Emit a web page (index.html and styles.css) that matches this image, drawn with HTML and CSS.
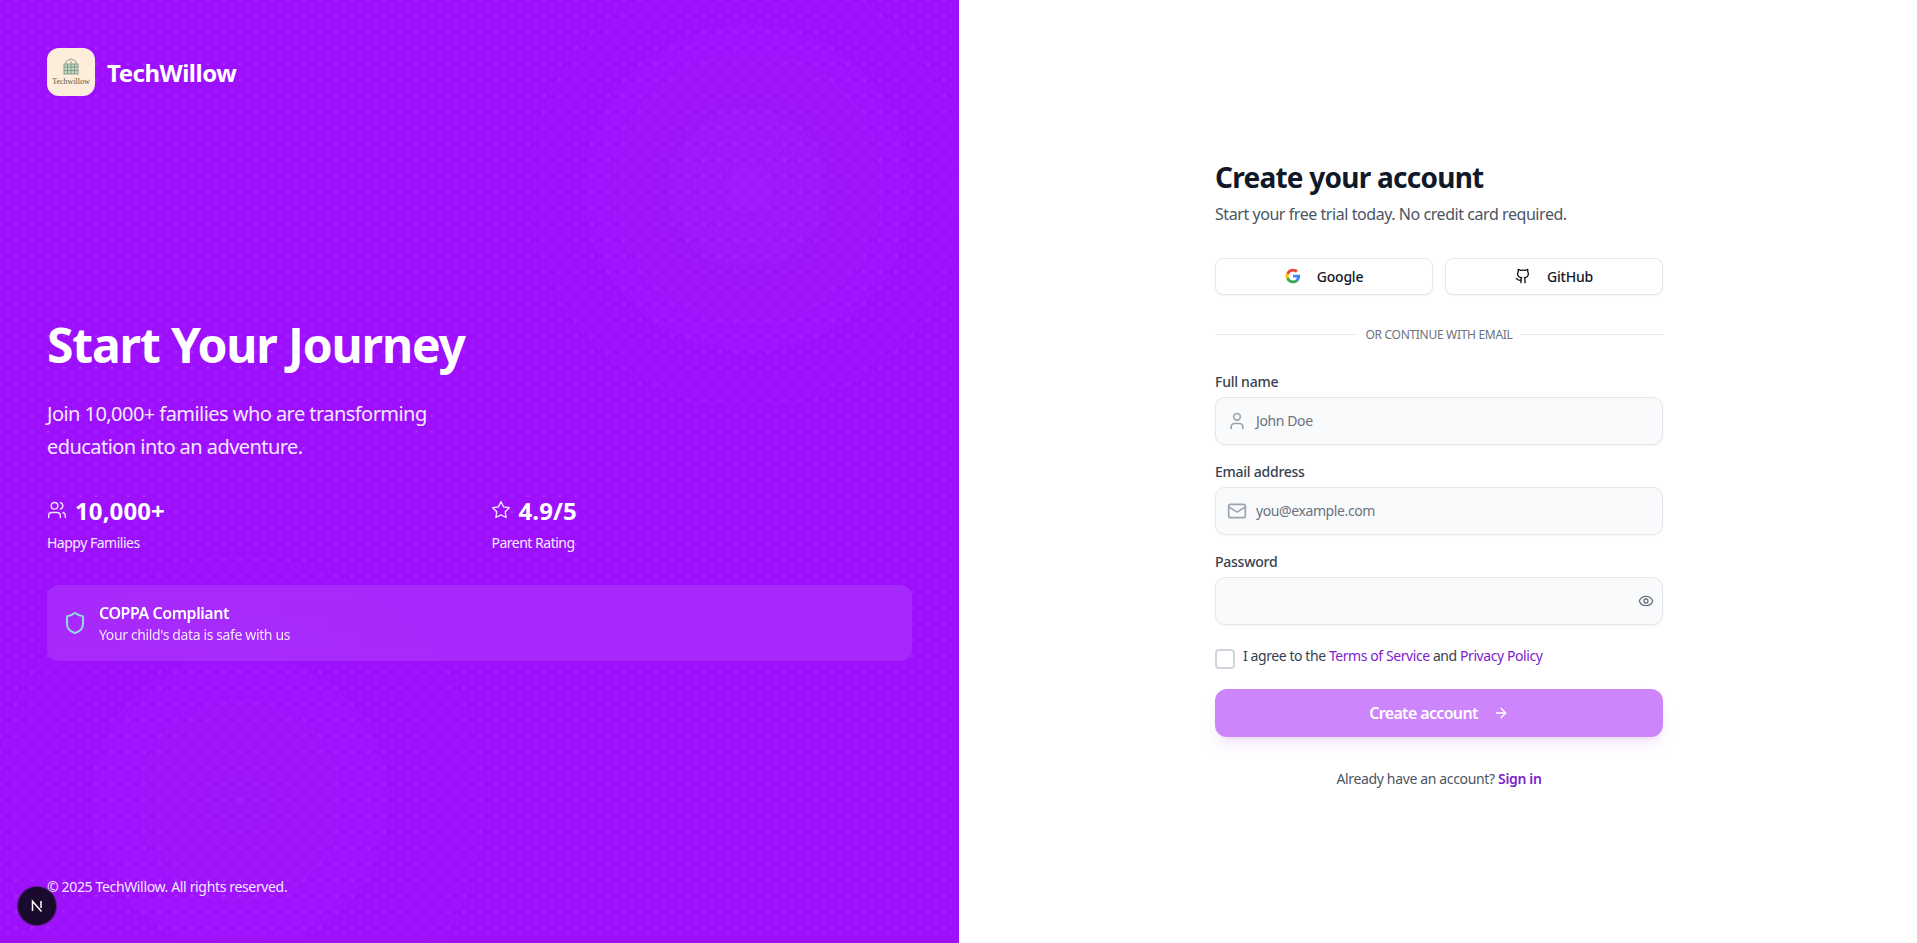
FILE: index.html
```html
<!DOCTYPE html>
<html lang="en">
<head>
    <meta charset="UTF-8" />
    <title>Sign up - TechWillow</title>
    <link rel="stylesheet" href="styles.css">
</head>
<body>
    <div class="page">
        <aside class="promo">
            <div class="brand">
                <div class="brand-logo">
                    <svg width="16" height="17" viewBox="0 0 16 17" fill="none" stroke="#7d9a88" stroke-width="0.9">
                        <path d="M3 6 L3 3.5 L8 0.8 L13 3.5 L13 6" />
                        <rect x="1" y="6" width="14" height="10" fill="#c6d6c3" />
                        <path d="M8 3 V16 M1 9 H15 M1 12.5 H15 M4.5 6 V16 M11.5 6 V16" />
                    </svg>
                    <span class="brand-logo-text">Techwillow</span>
                </div>
                <span class="brand-name">TechWillow</span>
            </div>

            <div class="promo-main">
                <h1>Start Your Journey</h1>
                <p class="promo-lead">Join 10,000+ families who are transforming education into an adventure.</p>
                <div class="stats">
                    <div class="stat">
                        <div class="stat-top">
                            <svg class="stat-icon" viewBox="0 0 24 24"><path d="M16 21v-2a4 4 0 0 0-4-4H6a4 4 0 0 0-4 4v2"/><circle cx="9" cy="7" r="4"/><path d="M22 21v-2a4 4 0 0 0-3-3.87"/><path d="M16 3.13a4 4 0 0 1 0 7.75"/></svg>
                            <span class="stat-value">10,000+</span>
                        </div>
                        <div class="stat-label">Happy Families</div>
                    </div>
                    <div class="stat">
                        <div class="stat-top">
                            <svg class="stat-icon stat-icon-star" viewBox="0 0 24 24"><path d="M12 2l3.09 6.26L22 9.27l-5 4.87 1.18 6.88L12 17.77l-6.18 3.25L7 14.14 2 9.27l6.91-1.01L12 2z"/></svg>
                            <span class="stat-value">4.9/5</span>
                        </div>
                        <div class="stat-label">Parent Rating</div>
                    </div>
                </div>
                <div class="coppa">
                    <svg class="coppa-icon" viewBox="0 0 24 24"><path d="M20 13c0 5-3.5 7.5-7.66 8.95a1 1 0 0 1-.67-.01C7.5 20.5 4 18 4 13V6a1 1 0 0 1 1-1c2 0 4.5-1.2 6.24-2.72a1.17 1.17 0 0 1 1.52 0C14.51 3.81 17 5 19 5a1 1 0 0 1 1 1z"/></svg>
                    <div>
                        <div class="coppa-title">COPPA Compliant</div>
                        <div class="coppa-text">Your child's data is safe with us</div>
                    </div>
                </div>
            </div>

            <div class="copyright">© 2025 TechWillow. All rights reserved.</div>
            <div class="next-badge">
                <svg width="14" height="14" viewBox="0 0 14 14" fill="none" stroke="#fff" stroke-width="1.5"><path d="M2.5 12V2.2L11.5 12.5" /><path d="M11 2v7" /></svg>
            </div>
        </aside>

        <main class="form-side">
            <div class="form-box">
                <h2>Create your account</h2>
                <p class="form-sub">Start your free trial today. No credit card required.</p>

                <div class="social">
                    <button class="social-btn">
                        <svg width="16" height="16" viewBox="0 0 24 24"><path fill="#4285F4" d="M22.56 12.25c0-.78-.07-1.53-.2-2.25H12v4.26h5.92c-.26 1.37-1.04 2.53-2.21 3.31v2.77h3.57c2.08-1.92 3.28-4.74 3.28-8.09z"/><path fill="#34A853" d="M12 23c2.97 0 5.46-.98 7.28-2.66l-3.57-2.77c-.98.66-2.23 1.06-3.71 1.06-2.86 0-5.29-1.93-6.16-4.53H2.18v2.84C3.99 20.53 7.7 23 12 23z"/><path fill="#FBBC05" d="M5.84 14.09c-.22-.66-.35-1.36-.35-2.09s.13-1.43.35-2.09V7.07H2.18C1.43 8.55 1 10.22 1 12s.43 3.45 1.18 4.93l2.85-2.22.81-.62z"/><path fill="#EA4335" d="M12 5.38c1.62 0 3.06.56 4.21 1.64l3.15-3.15C17.45 2.09 14.97 1 12 1 7.7 1 3.99 3.47 2.18 7.07l3.66 2.84c.87-2.6 3.3-4.53 6.16-4.53z"/></svg>
                        <span>Google</span>
                    </button>
                    <button class="social-btn">
                        <svg width="16" height="16" viewBox="0 0 24 24" fill="none" stroke="#111" stroke-width="2" stroke-linecap="round" stroke-linejoin="round"><path d="M15 22v-4a4.8 4.8 0 0 0-1-3.5c3 0 6-2 6-5.5.08-1.25-.27-2.48-1-3.5.28-1.15.28-2.35 0-3.5 0 0-1 0-3 1.5-2.64-.5-5.36-.5-8 0C6 2 5 2 5 2c-.3 1.15-.3 2.35 0 3.5A5.4 5.4 0 0 0 4 9c0 3.5 3 5.5 6 5.5-.39.49-.68 1.05-.85 1.65-.17.6-.22 1.23-.15 1.85v4"/><path d="M9 18c-4.51 2-5-2-7-2"/></svg>
                        <span>GitHub</span>
                    </button>
                </div>

                <div class="divider"><span>OR CONTINUE WITH EMAIL</span></div>

                <label class="field-label">Full name</label>
                <div class="field">
                    <svg class="field-icon" viewBox="0 0 24 24"><path d="M19 21v-2a4 4 0 0 0-4-4H9a4 4 0 0 0-4 4v2"/><circle cx="12" cy="7" r="4"/></svg>
                    <span class="placeholder">John Doe</span>
                </div>

                <label class="field-label">Email address</label>
                <div class="field">
                    <svg class="field-icon" viewBox="0 0 24 24"><rect x="2" y="4" width="20" height="16" rx="2"/><path d="m22 7-8.97 5.7a1.94 1.94 0 0 1-2.06 0L2 7"/></svg>
                    <span class="placeholder">you@example.com</span>
                </div>

                <label class="field-label">Password</label>
                <div class="field field-password">
                    <svg class="eye-icon" viewBox="0 0 24 24"><path d="M2.06 12.35a1 1 0 0 1 0-.7 10.75 10.75 0 0 1 19.88 0 1 1 0 0 1 0 .7 10.75 10.75 0 0 1-19.88 0"/><circle cx="12" cy="12" r="3"/></svg>
                </div>

                <div class="terms">
                    <span class="checkbox"></span>
                    <span>I agree to the <a href="#">Terms of Service</a> and <a href="#">Privacy Policy</a></span>
                </div>

                <button class="submit">
                    <span>Create account</span>
                    <svg width="16" height="16" viewBox="0 0 24 24" fill="none" stroke="#fff" stroke-width="2" stroke-linecap="round" stroke-linejoin="round"><path d="M5 12h14"/><path d="m12 5 7 7-7 7"/></svg>
                </button>

                <p class="signin">Already have an account? <a href="#">Sign in</a></p>
            </div>
        </main>
    </div>
</body>
</html>
```

FILE: styles.css
```css
* {
    box-sizing: border-box;
}

body {
    margin: 0;
    font-family: 'Noto Sans', sans-serif;
    background: #fff;
    overflow: hidden;
}

.page {
    display: grid;
    grid-template-columns: 959px 1fr;
    height: 943px;
}

/* left panel */
.promo {
    position: relative;
    display: flex;
    flex-direction: column;
    padding: 48px 47px 46px;
    color: #fff;
    background-color: #9d10fb;
    background-image:
        radial-gradient(rgba(255, 255, 255, 0.17) 1px, transparent 1.6px),
        radial-gradient(circle at 78% 20%, rgba(255, 255, 255, 0.035), transparent 22%),
        radial-gradient(circle at 25% 85%, rgba(255, 255, 255, 0.025), transparent 25%);
    background-size: 16px 16px, 100% 100%, 100% 100%;
    background-position: 8px 8px, 0 0, 0 0;
}

.brand {
    display: flex;
    align-items: center;
    gap: 12px;
}

.brand-logo {
    width: 48px;
    height: 48px;
    border-radius: 12px;
    background: #fdeedb;
    display: flex;
    flex-direction: column;
    align-items: center;
    justify-content: center;
    gap: 2px;
}

.brand-logo-text {
    font-family: 'Liberation Serif', serif;
    font-size: 8px;
    line-height: 9px;
    color: #47604f;
}

.brand-name {
    font-size: 24px;
    font-weight: 700;
    letter-spacing: -0.5px;
}

.promo-main {
    flex: 1;
    display: flex;
    flex-direction: column;
    justify-content: center;
    padding-top: 8px;
}

h1 {
    margin: 0 0 28px;
    font-size: 48px;
    line-height: 48px;
    font-weight: 700;
    letter-spacing: -1.15px;
}

.promo-lead {
    margin: 0 0 32px;
    max-width: 448px;
    font-size: 20px;
    line-height: 33px;
    color: #f3e8ff;
    letter-spacing: -0.55px;
}

.stats {
    display: grid;
    grid-template-columns: 1fr 1fr;
    gap: 24px;
    margin-bottom: 32px;
}

.stat-top {
    display: flex;
    align-items: center;
    gap: 8px;
    height: 32px;
}

.stat-icon {
    width: 20px;
    height: 20px;
    fill: none;
    stroke: #f3e8ff;
    stroke-width: 1.6;
    stroke-linecap: round;
    stroke-linejoin: round;
    margin-bottom: 2px;
}

.stat-icon-star {
    margin-left: -1px;
}

.stat-value {
    font-size: 24px;
    font-weight: 700;
    letter-spacing: 0.1px;
}

.stat-label {
    margin-top: 6px;
    font-size: 14px;
    line-height: 20px;
    color: #f3e8ff;
    letter-spacing: -0.5px;
}

.coppa {
    display: flex;
    align-items: center;
    gap: 12px;
    height: 76px;
    padding: 0 16px;
    border-radius: 12px;
    background: rgba(255, 255, 255, 0.1);
    backdrop-filter: blur(4px);
}

.coppa-icon {
    width: 24px;
    height: 24px;
    fill: none;
    stroke: #94d8e0;
    stroke-width: 2;
    stroke-linecap: round;
    stroke-linejoin: round;
}

.coppa-title {
    font-size: 16px;
    line-height: 24px;
    font-weight: 600;
    letter-spacing: -0.46px;
}

.coppa-text {
    font-size: 14px;
    line-height: 20px;
    color: #f3e8ff;
    letter-spacing: -0.37px;
}

.copyright {
    font-size: 14px;
    line-height: 20px;
    color: #f3e8ff;
    letter-spacing: -0.35px;
}

.next-badge {
    position: absolute;
    left: 18px;
    bottom: 18px;
    width: 38px;
    height: 38px;
    border-radius: 50%;
    background: #1a0b2e;
    box-shadow: 0 0 0 1px rgba(70, 30, 100, 0.8);
    display: flex;
    align-items: center;
    justify-content: center;
}

/* right panel */
.form-side {
    display: flex;
    align-items: center;
    justify-content: center;
    padding: 4px 0 0 2px;
}

.form-box {
    width: 448px;
}

h2 {
    margin: 0 0 7px;
    font-size: 28px;
    line-height: 36px;
    font-weight: 700;
    color: #111827;
    letter-spacing: -0.75px;
}

.form-sub {
    margin: 0 0 32px;
    font-size: 16px;
    line-height: 24px;
    color: #4b5563;
    letter-spacing: -0.44px;
}

.social {
    display: grid;
    grid-template-columns: 1fr 1fr;
    gap: 12px;
    margin-bottom: 30px;
}

.social-btn {
    display: flex;
    align-items: center;
    justify-content: center;
    gap: 16px;
    height: 37px;
    padding: 0;
    border: 1px solid #e5e7eb;
    border-radius: 8px;
    background: #fff;
    box-shadow: 0 1px 2px rgba(0, 0, 0, 0.05);
    font-family: inherit;
    font-size: 14px;
    font-weight: 500;
    color: #111827;
    letter-spacing: -0.2px;
}

.divider {
    display: flex;
    align-items: center;
    gap: 8px;
    margin-bottom: 27px;
    font-size: 12px;
    line-height: 20px;
    color: #6b7280;
    letter-spacing: -0.3px;
}

.divider::before,
.divider::after {
    content: "";
    flex: 1;
    height: 1px;
    background: #e5e7eb;
}

.field-label {
    display: block;
    margin-bottom: 5px;
    font-size: 14px;
    line-height: 20px;
    font-weight: 500;
    color: #374151;
    letter-spacing: -0.25px;
}

.field {
    display: flex;
    align-items: center;
    height: 48px;
    margin-bottom: 17px;
    padding: 0 12px;
    border: 1px solid #e5e7eb;
    border-radius: 10px;
    background: #f9fafb;
    box-shadow: 0 1px 2px rgba(0, 0, 0, 0.05);
}

.field-icon {
    width: 20px;
    height: 20px;
    margin: 0 9px 0 -1px;
    fill: none;
    stroke: #9ca3af;
    stroke-width: 2;
    stroke-linecap: round;
    stroke-linejoin: round;
}

.placeholder {
    font-size: 14px;
    color: #6b7280;
    letter-spacing: -0.4px;
}

.field-password {
    justify-content: flex-end;
    margin-bottom: 21px;
    padding: 0 8px;
}

.eye-icon {
    width: 16px;
    height: 16px;
    fill: none;
    stroke: #6b7280;
    stroke-width: 2;
    stroke-linecap: round;
    stroke-linejoin: round;
}

.terms {
    display: flex;
    align-items: flex-start;
    gap: 8px;
    margin-bottom: 20px;
    font-size: 14px;
    line-height: 20px;
    color: #374151;
    letter-spacing: -0.42px;
}

.checkbox {
    flex: none;
    width: 20px;
    height: 20px;
    margin-top: 3px;
    border: 2px solid #d1d5db;
    border-radius: 4px;
    background: #fff;
}

.terms a {
    color: #7e22ce;
    text-decoration: none;
}

.submit {
    display: flex;
    align-items: center;
    justify-content: center;
    gap: 15px;
    width: 100%;
    height: 48px;
    border: none;
    border-radius: 12px;
    background: #cc85fb;
    box-shadow: 0 10px 15px -3px rgba(204, 133, 251, 0.2), 0 4px 6px -4px rgba(0, 0, 0, 0.1);
    font-family: inherit;
    font-size: 16px;
    font-weight: 600;
    color: #fff;
    letter-spacing: -0.65px;
}

.signin {
    margin: 32px 0 0;
    text-align: center;
    font-size: 14px;
    line-height: 20px;
    color: #4b5563;
    letter-spacing: -0.35px;
}

.signin a {
    color: #7e22ce;
    font-weight: 600;
    text-decoration: none;
}
```
